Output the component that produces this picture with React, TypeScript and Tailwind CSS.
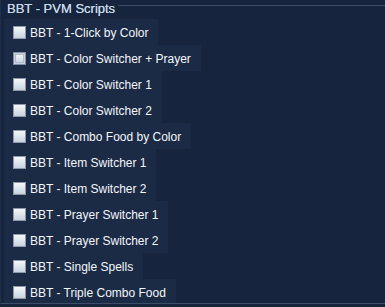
import React from "react";

const items = [
  "BBT - 1-Click by Color",
  "BBT - Color Switcher + Prayer",
  "BBT - Color Switcher 1",
  "BBT - Color Switcher 2",
  "BBT - Combo Food by Color",
  "BBT - Item Switcher 1",
  "BBT - Item Switcher 2",
  "BBT - Prayer Switcher 1",
  "BBT - Prayer Switcher 2",
  "BBT - Single Spells",
  "BBT - Triple Combo Food",
];

function Box({ hover }: { hover?: boolean }) {
  return (
    <span
      className={
        hover
          ? "w-[13px] h-[13px] shrink-0 border border-[#7f8ea3] bg-[#c9d3df] flex items-center justify-center"
          : "w-[13px] h-[13px] shrink-0 border border-[#8c99ab] bg-gradient-to-b from-[#f4f7fa] to-[#c8d3e0]"
      }
    >
      {hover && <span className="w-[9px] h-[9px] bg-gradient-to-b from-[#f2f5f8] to-[#cdd6e1] border border-[#b0bccb]" />}
    </span>
  );
}

export default function App() {
  return (
    <div
      className="w-[385px] h-[307px] bg-[#16253d] overflow-hidden"
      style={{ fontFamily: '"Liberation Sans", Arial, sans-serif' }}
    >
      <div className="h-[304px] border-b border-[#3b4e66] border-l border-l-[#1f3048] overflow-hidden flex flex-col">
        <div className="flex h-[19px] shrink-0">
          <span className="pl-[6px] pr-[3px] pt-[1px] text-[13px] leading-[15px] text-[#c6d6e6] whitespace-nowrap [text-shadow:0_0_0.4px_#c6d6e6]">
            BBT - PVM Scripts
          </span>
          <div className="flex-1 h-px bg-[#3b4e66] mt-[5px]" />
        </div>
        <div className="flex flex-col items-start">
          {items.map((t, i) => (
            <div
              key={t}
              className="ml-[3px] h-[26px] shrink-0 flex items-center pl-[9px] pr-[10px] gap-[4px] bg-[#1c2b45]"
            >
              <Box hover={i === 1} />
              <span className="text-[12px] text-[#f2f6fa] whitespace-nowrap leading-none pt-[1px]">{t}</span>
            </div>
          ))}
        </div>
      </div>
    </div>
  );
}
